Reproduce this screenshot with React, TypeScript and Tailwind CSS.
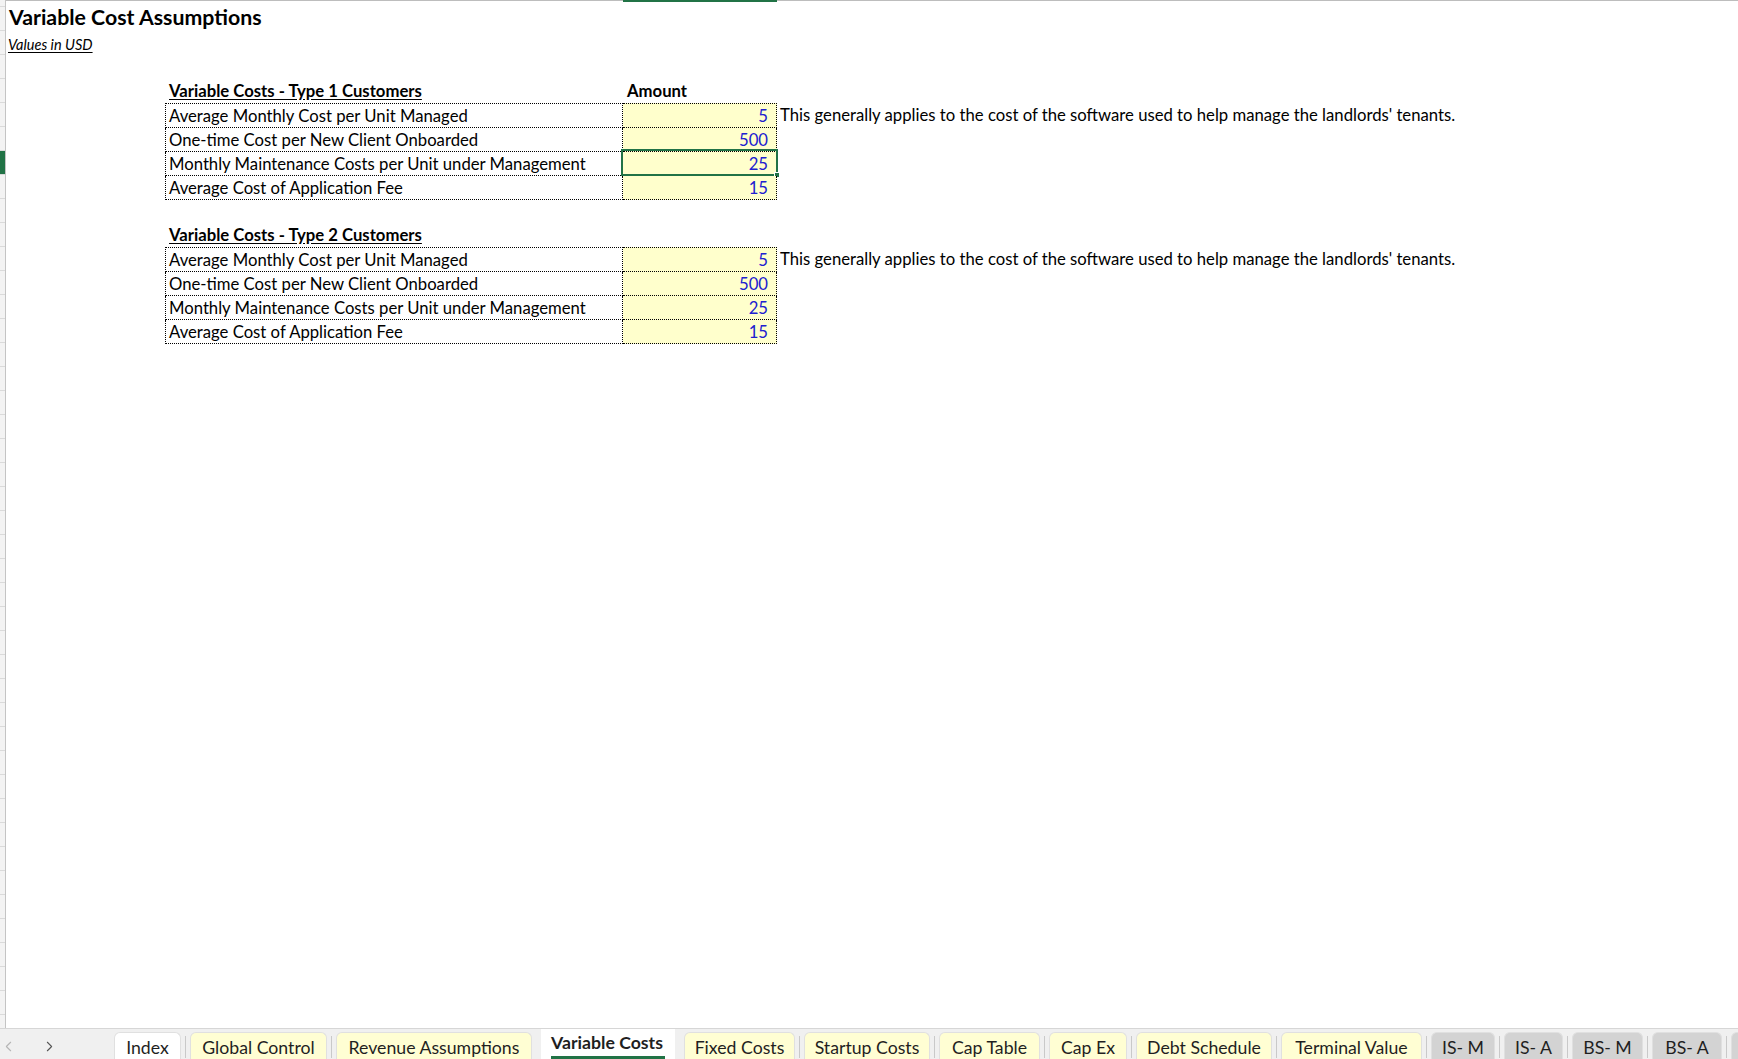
import { ChevronLeft, ChevronRight } from "lucide-react";

type Row = { label: string; value: string; note?: string; selected?: boolean };

const NOTE = "This generally applies to the cost of the software used to help manage the landlords' tenants.";

const TYPE1: Row[] = [
  { label: "Average Monthly Cost per Unit Managed", value: "5", note: NOTE },
  { label: "One-time Cost per New Client Onboarded", value: "500" },
  { label: "Monthly Maintenance Costs per Unit under Management", value: "25", selected: true },
  { label: "Average Cost of Application Fee", value: "15" },
];

const TYPE2: Row[] = [
  { label: "Average Monthly Cost per Unit Managed", value: "5", note: NOTE },
  { label: "One-time Cost per New Client Onboarded", value: "500" },
  { label: "Monthly Maintenance Costs per Unit under Management", value: "25" },
  { label: "Average Cost of Application Fee", value: "15" },
];

const TABS = [
  { name: "Index", w: "w-[67px]", bg: "bg-white" },
  { name: "Global Control", w: "w-[137px]", bg: "bg-[#fffed3]" },
  { name: "Revenue Assumptions", w: "w-[196px]", bg: "bg-[#fffed3]" },
  { name: "Variable Costs", w: "w-[134px]", bg: "active" },
  { name: "Fixed Costs", w: "w-[111px]", bg: "bg-[#fffed3]" },
  { name: "Startup Costs", w: "w-[126px]", bg: "bg-[#fffed3]" },
  { name: "Cap Table", w: "w-[101px]", bg: "bg-[#fffed3]" },
  { name: "Cap Ex", w: "w-[78px]", bg: "bg-[#fffed3]" },
  { name: "Debt Schedule", w: "w-[136px]", bg: "bg-[#fffed3]" },
  { name: "Terminal Value", w: "w-[141px]", bg: "bg-[#fffed3]" },
  { name: "IS- M", w: "w-[64px]", bg: "bg-[#d3d3d3]" },
  { name: "IS- A", w: "w-[59px]", bg: "bg-[#d3d3d3]" },
  { name: "BS- M", w: "w-[71px]", bg: "bg-[#d3d3d3]" },
  { name: "BS- A", w: "w-[70px]", bg: "bg-[#d3d3d3]" },
  { name: "", w: "w-[40px]", bg: "bg-[#d3d3d3]" },
];

function CostTable({ title, rows, showAmount }: { title: string; rows: Row[]; showAmount?: boolean }) {
  return (
    <div className="flex flex-col">
      <div className="flex h-[24px] leading-[23px] pt-[1px] font-bold">
        <div className="w-[458px] pl-[4px]">
          <span className="underline underline-offset-[2px]">{title}</span>
        </div>
        {showAmount && <div className="pl-[4px]">Amount</div>}
      </div>
      {rows.map((r, i) => {
        const first = i === 0;
        const edge = first ? "h-[25px] border-t" : "h-[24px]";
        return (
          <div key={r.label} className="flex leading-[24px]">
            <div className={`w-[458px] ${edge} border-l border-r border-b border-dotted border-black pl-[3px] whitespace-nowrap`}>
              {r.label}
            </div>
            <div className={`relative w-[154px] ${edge} border-r border-b border-dotted border-black bg-[#ffffcc] pr-[8px] text-right text-[#2020d0]`}>
              {r.value}
              {r.selected && (
                <div className="absolute -top-[3px] -left-[2px] -right-[2px] -bottom-[1px] border-2 border-[#217346]">
                  <div className="absolute -right-[4px] -bottom-[4px] w-[6px] h-[6px] bg-[#217346] border border-white" />
                </div>
              )}
            </div>
            {r.note && <div className="pl-[3px] whitespace-nowrap">{r.note}</div>}
          </div>
        );
      })}
    </div>
  );
}

export default function App() {
  return (
    <div className="w-[1738px] h-[1059px] overflow-hidden bg-white flex flex-col text-black font-['Lato',sans-serif]">
      <div className="flex-1 flex min-h-0">
        <div className="w-[6px] shrink-0 flex flex-col bg-[#f3f3f3] border-r border-[#c4c4c4]">
          <div className="h-[7px] shrink-0 border-b border-[#dadada]" />
          {Array.from({ length: 42 }).map((_, i) => (
            <div key={i} className={`h-[24px] shrink-0 border-b border-[#dadada] ${i === 6 ? "bg-[#217346]" : ""}`} />
          ))}
        </div>
        <div className="flex-1 flex flex-col min-w-0">
          <div className="h-[1px] shrink-0 bg-[#bdbdbd] flex">
            <div className="ml-[617px] w-[154px] h-[2px] bg-[#217346]" />
          </div>
          <div className="pl-[3px] mt-[3px] text-[21.3px] leading-[26px] font-bold">Variable Cost Assumptions</div>
          <div className="pl-[2px] mt-[6px] text-[14.5px] leading-[18px] italic">
            <span className="underline underline-offset-[2px]">Values in USD</span>
          </div>
          <div className="ml-[159px] mt-[25px] text-[16.7px] flex flex-col gap-[23px]">
            <CostTable title="Variable Costs - Type 1 Customers" rows={TYPE1} showAmount />
            <CostTable title="Variable Costs - Type 2 Customers" rows={TYPE2} />
          </div>
        </div>
      </div>

      <div className="h-[31px] shrink-0 flex items-start overflow-hidden bg-[#f0f0f0] border-t border-[#d6d6d6] text-[17.7px] text-[#1f1f1f]">
        <div className="w-[114px] shrink-0 flex items-center h-[34px] pl-[0px] gap-[24px]">
          <ChevronLeft className="w-[17px] h-[17px] text-[#b5b5b5]" strokeWidth={1.5} />
          <ChevronRight className="w-[17px] h-[17px] text-[#555555]" strokeWidth={1.5} />
        </div>
        {TABS.map((t, i) => {
          const active = t.bg === "active";
          const nextActive = TABS[i + 1]?.bg === "active";
          return (
            <div key={t.name + i} className="flex shrink-0">
              {active ? (
                <div className={`${t.w} h-[40px] bg-white flex justify-center pt-[2px] font-bold`}>
                  <span className="inline-block h-[28px] leading-[24px] border-b-[3px] border-[#217346] pb-[1px] pr-[2px]">{t.name}</span>
                </div>
              ) : (
                <div className={`${t.w} h-[40px] mt-[3px] ${t.bg} rounded-t-[6px] border border-b-0 border-[#e0e0e0] text-center leading-[24px] pt-[3px] whitespace-nowrap`}>
                  {t.name}
                </div>
              )}
              {i < TABS.length - 1 && (
                <div className="w-[9px] flex justify-center">
                  <div className={`w-px h-[22px] mt-[7px] ${active || nextActive ? "" : "bg-[#c9c9c9]"}`} />
                </div>
              )}
            </div>
          );
        })}
      </div>
    </div>
  );
}
